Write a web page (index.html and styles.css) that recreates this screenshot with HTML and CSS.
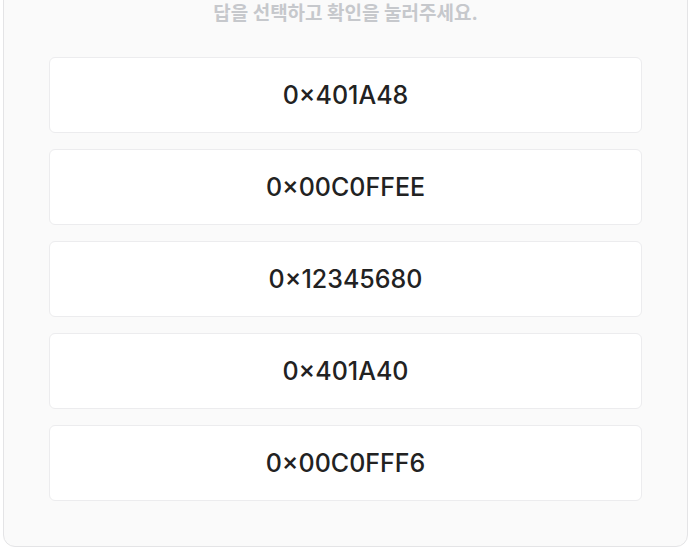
FILE: index.html
```html
<!DOCTYPE html>
<html lang="ko">
    <head>
        <meta charset="UTF-8">
        <meta name="viewport" content="width=device-width, initial-scale=1.0">
        <title>퀴즈</title>
        <link rel="stylesheet" href="styles.css">
    </head>
    <body>
        <div class="clCard">
            <p class="clAviso">답을 선택하고 확인을 눌러주세요.</p>
            <ul class="clOpcoes">
                <li class="clOpcao">0×401A48</li>
                <li class="clOpcao">0×00C0FFEE</li>
                <li class="clOpcao">0×12345680</li>
                <li class="clOpcao">0×401A40</li>
                <li class="clOpcao">0×00C0FFF6</li>
            </ul>
        </div>
    </body>
</html>
```

FILE: styles.css
```css
/*Reset*/
html,
body,
p,
ul,
li {
margin: 0;
padding: 0;
}

ul {
list-style: none;
}

html {
box-sizing: border-box;
}

*, *::before, *::after {
box-sizing: inherit;
}

/*Página*/

body{
    background-color: #ffffff;
    font-family: Inter, "Noto Sans CJK KR", sans-serif;
    padding: 0 3px;
}

.clCard{
    margin-top: -24px;
    background-color: #fafafa;
    border: 1px solid #e4e4e6;
    border-radius: 12px;
    padding: 24px 45px 45px 45px;
}

.clAviso{
    text-align: center;
    font-size: 19px;
    font-weight: 700;
    color: #c6c8cc;
    line-height: 26px;
    margin-bottom: 30px;
}

.clOpcoes{
    display: flex;
    flex-direction: column;
    gap: 16px;
}

.clOpcao{
    height: 76px;
    display: flex;
    align-items: center;
    justify-content: center;
    background-color: #ffffff;
    border: 1px solid #ececee;
    border-radius: 6px;
    font-size: 25px;
    font-weight: 500;
    color: #222222;
}
```
